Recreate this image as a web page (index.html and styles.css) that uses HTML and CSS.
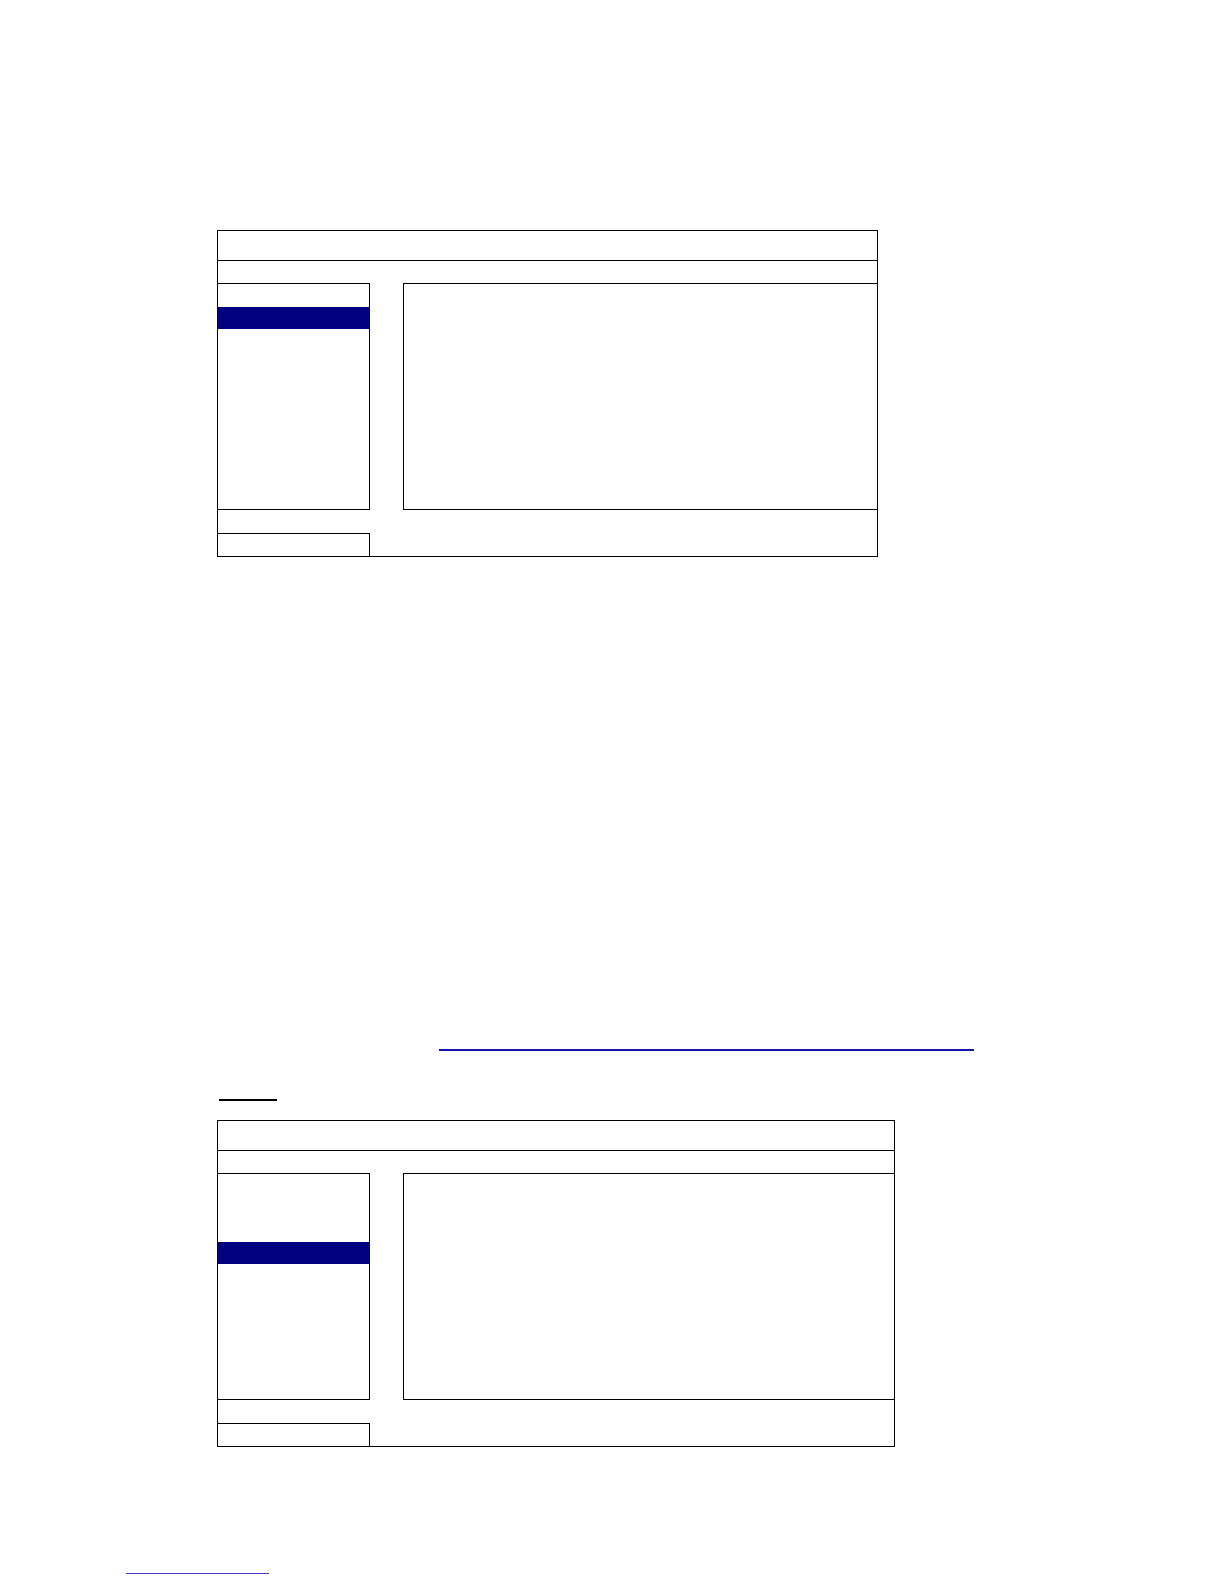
FILE: index.html
```html
<!DOCTYPE html>
<html>
<head>
<meta charset="utf-8">
<title>Menu screens</title>
<link rel="stylesheet" href="styles.css">
</head>
<body>
<div class="page">
  <div class="screen screen-a">
    <div class="screen-title"></div>
    <div class="screen-tabs"></div>
    <div class="screen-body">
      <ul class="menu">
        <li></li>
        <li class="active"></li>
        <li></li>
        <li></li>
        <li></li>
        <li></li>
      </ul>
      <div class="panel"></div>
    </div>
    <div class="screen-gap"></div>
    <div class="screen-foot"></div>
  </div>

  <div class="link-row"><a class="link"></a></div>
  <div class="label-row"><span class="label"></span></div>

  <div class="screen screen-b">
    <div class="screen-title"></div>
    <div class="screen-tabs"></div>
    <div class="screen-body">
      <ul class="menu">
        <li></li>
        <li></li>
        <li></li>
        <li class="active"></li>
        <li></li>
        <li></li>
      </ul>
      <div class="panel"></div>
    </div>
    <div class="screen-gap"></div>
    <div class="screen-foot"></div>
  </div>

  <div class="footer-row"><span class="footer-link"></span></div>
</div>
</body>
</html>
```

FILE: styles.css
```css
html, body {
  margin: 0;
  padding: 0;
  background: #ffffff;
  font-family: "Liberation Sans", Arial, sans-serif;
}

.page {
  width: 1224px;
  min-height: 1584px;
  box-sizing: border-box;
  overflow: hidden;
}

.screen {
  margin-left: 217px;
  border: 1px solid #000;
  box-sizing: border-box;
}

.screen-a {
  margin-top: 230px;
  width: 661px;
}

.screen-b {
  margin-top: 19px;
  width: 678px;
}

.screen-title {
  height: 29px;
  border-bottom: 1px solid #000;
}

.screen-tabs {
  height: 22px;
}

.screen-body {
  display: flex;
  gap: 33px;
  height: 227px;
}

.menu {
  list-style: none;
  margin: 0;
  padding: 0;
  width: 152px;
  box-sizing: border-box;
  border-top: 1px solid #000;
  border-right: 1px solid #000;
  border-bottom: 1px solid #000;
  display: flex;
  flex-direction: column;
}

.menu li {
  height: 22.5px;
  margin-right: -1px;
}

.menu li.active {
  background: #000080;
}

.panel {
  flex: 1;
  border-top: 1px solid #000;
  border-left: 1px solid #000;
  border-bottom: 1px solid #000;
}

.screen-gap {
  height: 23px;
}

.screen-foot {
  width: 152px;
  height: 23px;
  border-top: 1px solid #000;
  border-right: 1px solid #000;
  box-sizing: border-box;
}

.link-row {
  margin-top: 480px;
  padding-left: 439px;
}

.link {
  display: block;
  width: 535px;
  height: 12px;
  border-bottom: 2px solid #1414a8;
}

.label-row {
  margin-top: 36px;
  padding-left: 219px;
}

.label {
  display: block;
  width: 58px;
  height: 12px;
  border-bottom: 2px solid #000;
}

.footer-row {
  margin-top: 114px;
  padding-left: 126px;
}

.footer-link {
  display: block;
  width: 143px;
  height: 12px;
  border-bottom: 1px solid #3c3cc8;
}
```
